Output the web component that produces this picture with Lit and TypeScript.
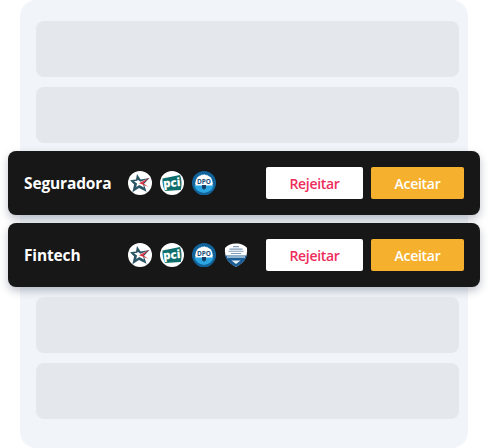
import { LitElement, html, css, svg } from "lit";
import { customElement } from "lit/decorators.js";

const star = svg`<svg class="ic" viewBox="0 0 24 24"><circle cx="12" cy="12" r="12" fill="#fff"/><path d="M9 3l3.600 5.400 8.900-1.400-5.600 6 2.600 7.800-7.500-3.800-6.600 4.300 1.700-7.800L2 9.300l6-.9z" fill="#2c5668"/><path d="M9.700 8.800l2.800 2 6-2.500-3.800 4 1.300 4.200-4.700-2.500-3 2 .7-3.500-3-2.200 3.300-.5z" fill="#fff"/><path d="M21.500 6.800L11 12.300l9.500 3.400-5.400-3.500z" fill="#dd3344"/></svg>`;
const pci = svg`<svg class="ic" viewBox="0 0 24 24"><circle cx="12" cy="12" r="12" fill="#fff"/><path d="M2.500 7.500L20 4c1.800 4 2 10 .8 15L5 20C3 16.500 2.300 11.500 2.500 7.500z" fill="#0e6e6b"/><text x="11.800" y="15.800" text-anchor="middle" font-family="Open Sans" font-size="11.500" font-weight="800" fill="#fff" transform="rotate(-5 12 12)">pci</text></svg>`;
const dpo = svg`<svg class="ic" viewBox="0 0 24 24"><circle cx="12" cy="12" r="12" fill="#12639a"/><path d="M4.500 9a8 8 0 0 1 15 0" fill="none" stroke="#9fd0ee" stroke-width="1.200" stroke-dasharray="1 .6"/><circle cx="12" cy="12.500" r="8.800" fill="#fff"/><path d="M2.400 14.500h19.200A10 10 0 0 1 2.400 14.500z" fill="#2ba6e2"/><path d="M5 20.500a10 10 0 0 0 14 0" fill="none" stroke="#12639a" stroke-width="2"/><text x="12" y="12.800" text-anchor="middle" font-family="Open Sans" font-size="6.500" font-weight="700" fill="#1c4f7c">DPO</text><path d="M10 14h4v3.200l-2 1.500-2-1.500z" fill="#173f66"/></svg>`;
const shield = svg`<svg class="ic" viewBox="0 0 24 24"><path d="M1 5C3 2.500 7 .5 12 .5S21 2.500 23 5c.500 8-1.500 14-11 19C2.500 19 .5 13 1 5z" fill="#fff"/><path d="M1.300 12.500h21.400C21.800 17 18.500 20.700 12 24 5.500 20.700 2.200 17 1.300 12.500z" fill="#1d5d96"/><path d="M9 3h6v1.200H9zM5.500 5.500h13v1.200H5.500zM4.500 7.800h15v1H4.500zM7 10h10v1H7z" fill="#7f9cb8"/><path d="M3 13h18v2H3z" fill="#8fb4d2"/><path d="M7.500 17.500H16.500L12 21z" fill="#e6f0f8"/></svg>`;

@customElement("app-root")
export class AppRoot extends LitElement {
  static styles = css`
    :host {
      display: block;
      width: 488px;
      height: 448px;
      background: #fff;
      overflow: hidden;
      font-family: "Open Sans", sans-serif;
    }
    .panel {
      box-sizing: border-box;
      margin-left: 20px;
      width: 448px;
      height: 448px;
      background: #f1f5f9;
      border-radius: 16px;
      padding: 21px 9px 0 16px;
      display: flex;
      flex-direction: column;
    }
    .sk {
      height: 56px;
      flex: none;
      background: #e4e8ed;
      border-radius: 8px;
    }
    .sk + .sk { margin-top: 10px; }
    .cards {
      display: flex;
      flex-direction: column;
      gap: 8px;
      margin: 8px -21px 10px -28px;
    }
    .card {
      height: 64px;
      box-sizing: border-box;
      background: #171717;
      border-radius: 8px;
      box-shadow: 0 4px 8px rgba(30, 40, 70, 0.28);
      padding: 0 16px;
      display: flex;
      align-items: center;
    }
    .name {
      width: 104px;
      color: #fff;
      font-size: 15.500px;
      font-weight: 700;
      letter-spacing: -0.15px;
      white-space: nowrap;
    }
    .icons {
      flex: 1;
      display: flex;
      gap: 8px;
    }
    .ic { width: 24px; height: 24px; display: block; }
    .btns { display: flex; gap: 8px; }
    .btn {
      height: 32px;
      display: flex;
      align-items: center;
      justify-content: center;
      border-radius: 2px;
      padding-top: 1px;
      box-sizing: border-box;
      font-size: 14px;
      font-weight: 600;
      letter-spacing: -0.3px;
    }
    .rej { width: 97px; background: #fff; color: #ee2c5c; }
    .ace { width: 93px; background: #f5b02e; color: #fff; }
  `;

  private card(name: string, icons: unknown[]) {
    return html`<div class="card">
      <div class="name">${name}</div>
      <div class="icons">${icons}</div>
      <div class="btns">
        <div class="btn rej">Rejeitar</div>
        <div class="btn ace">Aceitar</div>
      </div>
    </div>`;
  }

  render() {
    return html`<div class="panel">
      <div class="sk"></div>
      <div class="sk"></div>
      <div class="cards">
        ${this.card("Seguradora", [star, pci, dpo])}
        ${this.card("Fintech", [star, pci, dpo, shield])}
      </div>
      <div class="sk"></div>
      <div class="sk"></div>
    </div>`;
  }
}
